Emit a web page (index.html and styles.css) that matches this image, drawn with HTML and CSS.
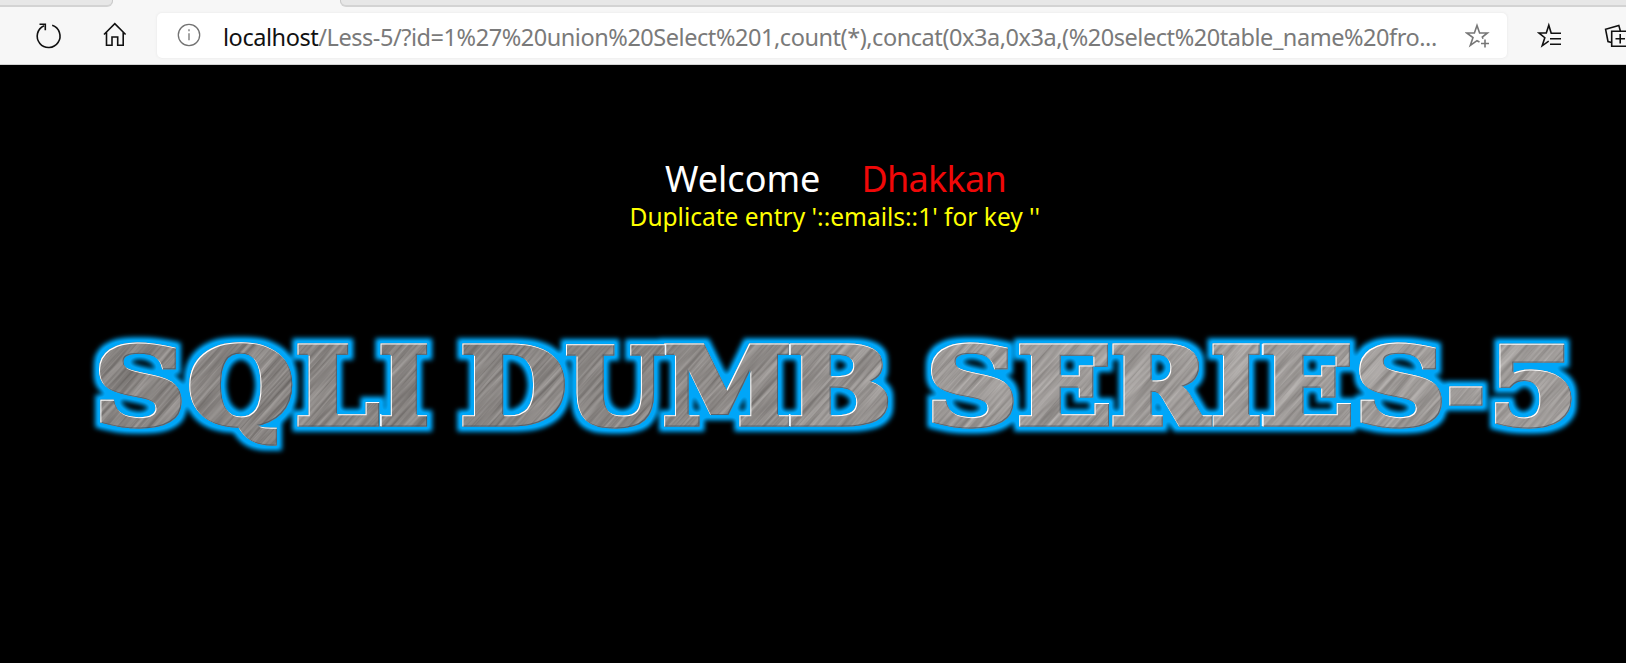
FILE: index.html
```html
<!DOCTYPE html>
<html lang="en">
<head>
<meta charset="utf-8">
<title>Less-5</title>
<link rel="stylesheet" href="styles.css">
</head>
<body>
<header class="browser">
  <div class="tabs"><div class="tab tab-first"></div><div class="tab-active"></div><div class="tab tab-rest"></div></div>
  <div class="toolbar">
    <svg class="icon reload" width="28" height="28" viewBox="0 0 28 28"><path d="M17.2 3.3A11.4 11.4 0 1 1 9 3.7M4.5 2.2h5.8v6"/></svg>
    <svg class="icon home" width="26" height="28" viewBox="0 0 26 28"><path d="M2 13.5 12.8 2.7 23.6 13.5M4.5 11.5V24.3H10V16H15.7V24.3H21.2V11.5"/></svg>
    <div class="address">
      <svg class="icon info" width="26" height="26" viewBox="0 0 26 26"><circle cx="13" cy="13" r="10.7"/><path d="M13 11.2V18.2M13 7.3V9.2"/></svg>
      <div class="url"><span class="host">localhost</span>/Less-5/?id=1%27%20union%20Select%201,count(*),concat(0x3a,0x3a,(%20select%20table_name%20fro...</div>
      <svg class="icon star" width="26" height="28" viewBox="0 0 26 28"><path d="M14.5 20 12 18.7 5.3 23.5 8 15.6 1.8 11H9.4L12 3.4 14.6 11H22.4L17.3 15 18 16.8M20 17.5V25.5M16 21.5H24"/></svg>
    </div>
    <svg class="icon favorites" width="26" height="28" viewBox="0 0 26 28"><path d="M11.7 19.2 5.2 23.8 7.8 15.7 1.8 11H9.3L11.8 3.2 14.2 11.2H24M13 16.7H24M13 22.2H24"/></svg>
    <svg class="icon collections" width="27" height="28" viewBox="0 0 27 28"><path d="M7.5 20.5 4 19.5 1.6 7.3 14.8 3.4 16.3 8.7M7.7 9.3H24.7V24.3H7.7ZM16.2 12V21.5M11.5 16.7H21"/></svg>
  </div>
</header>
<main class="page">
  <div class="welcome"><span>Welcome</span><span class="name">Dhakkan</span></div>
  <p class="error">Duplicate entry '::emails::1' for key ''</p>
  <svg class="banner" width="1626" height="160" viewBox="0 310 1626 160" role="img" aria-label="SQLI DUMB SERIES-5">
    <defs>
      <filter id="glow" filterUnits="userSpaceOnUse" x="60" y="310" width="1560" height="160" color-interpolation-filters="sRGB">
        <feMorphology in="SourceAlpha" operator="dilate" radius="5"/>
        <feGaussianBlur stdDeviation="2.8" result="halo"/>
        <feComponentTransfer in="halo" result="wide"><feFuncA type="linear" slope="1.15"/></feComponentTransfer>
        <feFlood flood-color="#00a6f8"/>
        <feComposite operator="in" in2="wide"/>
      </filter>
      <filter id="bevel" filterUnits="userSpaceOnUse" x="60" y="310" width="1560" height="160" color-interpolation-filters="sRGB">
        <feOffset in="SourceAlpha" dx="1.4" dy="1.4" result="lower"/>
        <feComposite in="SourceAlpha" in2="lower" operator="out" result="edge"/>
        <feFlood flood-color="#fff"/>
        <feComposite operator="in" in2="edge" result="light"/>
        <feOffset in="SourceAlpha" dx="-1" dy="-1" result="upper"/>
        <feComposite in="SourceAlpha" in2="upper" operator="out" result="edge2"/>
        <feFlood flood-color="#3c5262" flood-opacity=".7"/>
        <feComposite operator="in" in2="edge2" result="dark"/>
        <feMerge><feMergeNode in="dark"/><feMergeNode in="light"/></feMerge>
      </filter>
      <filter id="brushed" x="0" y="0" width="100%" height="100%" color-interpolation-filters="sRGB">
        <feTurbulence type="fractalNoise" baseFrequency="0.012 0.3" numOctaves="3" seed="8"/>
        <feColorMatrix values=".36 0 0 0 .4  .36 0 0 0 .383  .36 0 0 0 .373  0 0 0 0 1"/>
      </filter>
      <linearGradient id="metal" x1="90" x2="1580" y1="0" y2="0" gradientUnits="userSpaceOnUse">
        <stop offset="0" stop-color="#000" stop-opacity=".07"/><stop offset=".35" stop-color="#000" stop-opacity=".08"/><stop offset=".6" stop-color="#fff" stop-opacity=".1"/><stop offset="1" stop-color="#fff" stop-opacity=".1"/>
      </linearGradient>
      <mask id="letters" maskUnits="userSpaceOnUse" x="0" y="310" width="1626" height="160"><use href="#title" class="mask-fill"/></mask>
    </defs>
    <use href="#title" filter="url(#glow)"/>
    <g id="title" class="title">
      <text transform="translate(93.6 424) scale(1.2 1)">S</text>
      <text transform="translate(187 424) scale(1.155 1)">Q</text>
      <text transform="translate(294.7 424) scale(1.12 1)">L</text>
      <text transform="translate(378 424) scale(1.03 1)">I</text>
      <text transform="translate(459.5 424) scale(1.16 1)">D</text>
      <text transform="translate(564.8 424) scale(1.07 1)">U</text>
      <text transform="translate(662 424) scale(1.095 1)">M</text>
      <text transform="translate(786.7 424) scale(1.165 1)">B</text>
      <text transform="translate(925.6 424) scale(1.2 1)">S</text>
      <text transform="translate(1016.2 424) scale(1.18 1)">E</text>
      <text transform="translate(1109.7 424) scale(1.11 1)">R</text>
      <text transform="translate(1210 424) scale(1.04 1)">I</text>
      <text transform="translate(1259.7 424) scale(1.16 1)">E</text>
      <text transform="translate(1353.8 424) scale(1.2 1)">S</text>
      <text transform="translate(1446.5 425) scale(.87 1)">-</text>
      <text transform="translate(1487.4 424) scale(1.22 1)">5</text>
    </g>
    <g mask="url(#letters)">
      <g transform="rotate(-48 813 390)"><rect x="180" y="-230" width="1270" height="1240" filter="url(#brushed)"/></g>
      <rect x="60" y="310" width="1560" height="160" fill="url(#metal)"/>
    </g>
    <use href="#title" filter="url(#bevel)"/>
    <path class="seams" d="M380.7 414V426M665.5 344V355M789.7 344V355M789.7 414V426M1262.5 344V355M1262.5 414V426"/>
  </svg>
</main>
</body>
</html>
```
FILE: styles.css
```css
body {
  margin: 0;
  height: 663px;
  overflow: hidden;
  background: #000;
  font-family: "Noto Sans", "Open Sans", sans-serif;
}
.browser {
  height: 65px;
  box-sizing: border-box;
  overflow: hidden;
  background: #f7f7f7;
  border-bottom: 1px solid #d2d2d2;
}
.tabs { display: flex; height: 7px; }
.tab {
  box-sizing: border-box;
  background: #e7e7e7;
  border-bottom: 2px solid #d3d3d3;
}
.tab-first { width: 113px; border-right: 1px solid #c8c8c8; border-bottom-right-radius: 6px; }
.tab-active { width: 227px; }
.tab-rest { flex: 1; border-left: 1px solid #c8c8c8; border-bottom-left-radius: 6px; }
.toolbar { display: flex; height: 57px; padding-top: 6px; box-sizing: border-box; }
.icon { flex: none; fill: none; stroke: #111; stroke-width: 1.6; }
.reload { margin: 9px 0 0 35px; }
.home { margin: 8px 0 0 39px; }
.address {
  display: flex;
  flex: none;
  width: 1350px;
  height: 45px;
  margin-left: 29px;
  box-sizing: border-box;
  padding-left: 19px;
  background: #fff;
  border-radius: 5px;
  box-shadow: 0 0 3px #e5e5e5;
}
.info { margin-top: 9px; stroke: #737373; stroke-width: 1.3; }
.url {
  width: 1221px;
  margin-left: 21px;
  font-size: 23.5px;
  letter-spacing: -0.45px;
  line-height: 48px;
  color: #7a7a7a;
  white-space: nowrap;
}
.host { color: #111; }
.star { margin: 9px 0 0 21px; stroke: #777; }
.favorites { margin: 9px 0 0 30px; }
.collections { margin: 9px 0 0 41px; }
.page { display: flex; flex-direction: column; }
.welcome {
  display: flex;
  gap: 41px;
  margin: 88px 0 0 665px;
  font-size: 36px;
  line-height: 52px;
  color: #fff;
}
.name { color: #f00808; letter-spacing: -0.7px; }
.error {
  margin: -4px 0 0 629.5px;
  font-size: 24.5px;
  line-height: 32px;
  color: #ff0;
  white-space: nowrap;
}
.banner { display: block; margin-top: 77px; }
.title {
  font: bold 107px "DejaVu Serif", serif;
  fill: #918c89;
  stroke: #918c89;
  stroke-width: 5px;
  stroke-linejoin: miter;
}
.mask-fill { filter: brightness(0) invert(1); }
.seams { stroke: #eef8ff; stroke-width: 1.5; fill: none; }
```
